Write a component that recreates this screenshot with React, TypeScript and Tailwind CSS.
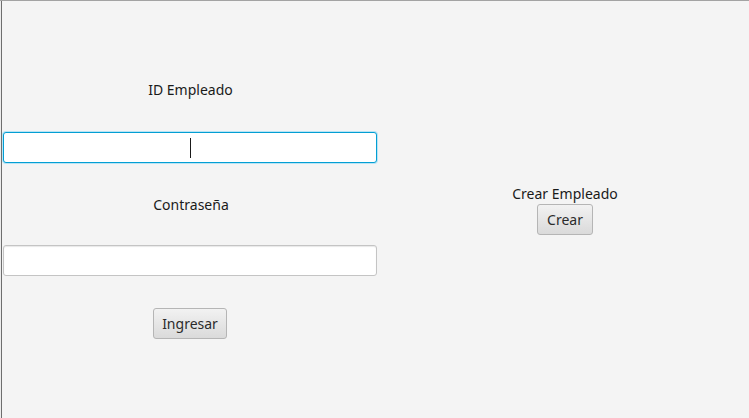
export default function App() {
    const font = { fontFamily: '"Noto Sans", "Open Sans", sans-serif' }

    return (
        <div
            className="w-[749px] h-[418px] bg-[#f4f4f4] border-t border-[#a3a3a3] flex text-[14px] text-[#1a1a1a] overflow-hidden"
            style={font}
        >
            <div className="w-[1px] bg-[#ececec]"></div>
            <div className="w-[1px] bg-[#6e6e6e]"></div>

            {/* login form */}
            <div className="w-[375px] pl-[1px] flex flex-col items-center pt-[80px]">
                <div className="h-[18px] leading-[18px] ml-[1px]">ID Empleado</div>
                <div className="mt-[33px] w-[374px] h-[31px] bg-white border border-[#039ed3] rounded-[3px] shadow-[0_0_0_1px_#b8e4f5] flex items-center justify-center">
                    <div className="w-[1px] h-[20px] bg-[#1a1a1a]"></div>
                </div>
                <div className="mt-[33px] h-[18px] leading-[18px] ml-[2px]">Contraseña</div>
                <div className="mt-[31px] w-[374px] h-[31px] bg-white border border-[#c4c4c4] rounded-[3px] shadow-[inset_0_1px_1px_#e8e8e8]"></div>
                <button className="mt-[32px] w-[74px] h-[31px] rounded-[3px] border border-[#b5b5b5] bg-gradient-to-b from-[#f2f2f2] to-[#dadada] text-[#2b2b2b] leading-none">
                    Ingresar
                </button>
            </div>

            {/* crear empleado */}
            <div className="flex-1 flex flex-col items-center pt-[184px] pl-[4px]">
                <div className="h-[18px] leading-[18px]">Crear Empleado</div>
                <button className="mt-[1px] w-[56px] h-[31px] rounded-[3px] border border-[#b5b5b5] bg-gradient-to-b from-[#f2f2f2] to-[#dadada] text-[#2b2b2b] leading-none">
                    Crear
                </button>
            </div>
        </div>
    )
}
